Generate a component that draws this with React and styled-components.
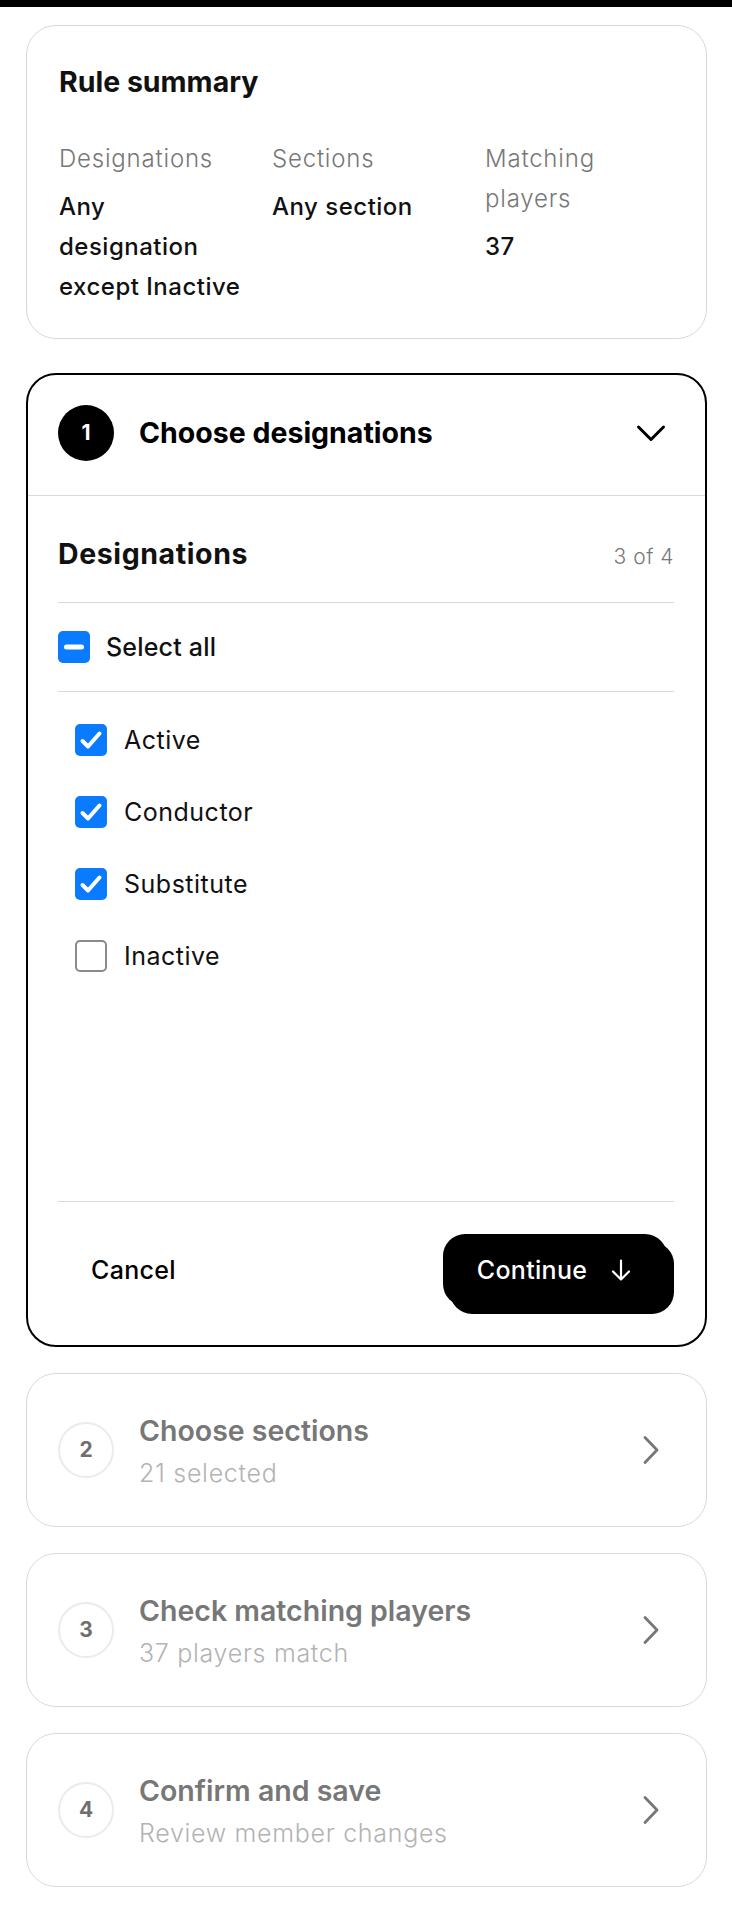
import React from 'react'
import styled, { createGlobalStyle, css } from 'styled-components'

const GlobalStyle = createGlobalStyle`
  * {
    box-sizing: border-box;
  }
  body {
    margin: 0;
    background: #ffffff;
    color: #111111;
    font-family: 'Inter', 'Liberation Sans', sans-serif;
  }
`

const designations = [
  { label: 'Active', checked: true },
  { label: 'Conductor', checked: true },
  { label: 'Substitute', checked: true },
  { label: 'Inactive', checked: false },
]

const steps = [
  { n: 2, title: 'Choose sections', sub: '21 selected' },
  { n: 3, title: 'Check matching players', sub: '37 players match' },
  { n: 4, title: 'Confirm and save', sub: 'Review member changes' },
]

const Check = () => (
  <svg width='32' height='32' viewBox='0 0 32 32' fill='none'>
    <polyline
      points='7.5,17 13,22.5 24.5,9.5'
      stroke='#fff'
      strokeWidth='4'
      strokeLinecap='round'
      strokeLinejoin='round'
    />
  </svg>
)

const Minus = () => (
  <svg width='32' height='32' viewBox='0 0 32 32' fill='none'>
    <line x1='8.5' y1='16' x2='23.5' y2='16' stroke='#fff' strokeWidth='5' strokeLinecap='round' />
  </svg>
)

const ChevronDown = () => (
  <svg width='32' height='32' viewBox='0 0 32 32' fill='none'>
    <polyline
      points='3.5,10 16,22.5 28.5,10'
      stroke='#000'
      strokeWidth='3'
      strokeLinecap='round'
      strokeLinejoin='round'
    />
  </svg>
)

const ChevronRight = () => (
  <svg width='32' height='32' viewBox='0 0 32 32' fill='none'>
    <polyline
      points='10,3.5 22,16 10,28.5'
      stroke='#777'
      strokeWidth='2.8'
      strokeLinecap='round'
      strokeLinejoin='round'
    />
  </svg>
)

const ArrowDown = () => (
  <svg width='24' height='24' viewBox='0 0 24 24' fill='none'>
    <path
      d='M12 2.5v19M4 13.5l8 8 8-8'
      stroke='#fff'
      strokeWidth='2.2'
      strokeLinecap='round'
      strokeLinejoin='round'
    />
  </svg>
)

const App = () => {
  return (
    <>
      <GlobalStyle />
      <TopBar />
      <Page>
        <SummaryCard>
          <SummaryTitle>Rule summary</SummaryTitle>
          <SummaryGrid>
            <div>
              <SummaryLabel>Designations</SummaryLabel>
              <SummaryValue>Any designation except Inactive</SummaryValue>
            </div>
            <div>
              <SummaryLabel>Sections</SummaryLabel>
              <SummaryValue>Any section</SummaryValue>
            </div>
            <div>
              <SummaryLabel>Matching players</SummaryLabel>
              <SummaryValue>37</SummaryValue>
            </div>
          </SummaryGrid>
        </SummaryCard>

        <StepCard $active>
          <StepHeader $active>
            <StepNumber $active>1</StepNumber>
            <StepText $active>
              <StepTitle $active>Choose designations</StepTitle>
            </StepText>
            <ChevronDown />
          </StepHeader>

          <StepBody>
            <SectionHead>
              <SectionTitle>Designations</SectionTitle>
              <Count>3 of 4</Count>
            </SectionHead>

            <SelectAllRow>
              <Box $checked>
                <Minus />
              </Box>
              <SelectAllLabel>Select all</SelectAllLabel>
            </SelectAllRow>

            <OptionList>
              {designations.map((d) => (
                <OptionRow key={d.label}>
                  <Box $checked={d.checked}>{d.checked && <Check />}</Box>
                  <OptionLabel>{d.label}</OptionLabel>
                </OptionRow>
              ))}
            </OptionList>

            <Footer>
              <CancelButton type='button'>Cancel</CancelButton>
              <ContinueButton type='button'>
                Continue
                <ArrowDown />
              </ContinueButton>
            </Footer>
          </StepBody>
        </StepCard>

        {steps.map((s) => (
          <StepCard key={s.n}>
            <StepHeader>
              <StepNumber>{s.n}</StepNumber>
              <StepText>
                <StepTitle>{s.title}</StepTitle>
                <StepSub>{s.sub}</StepSub>
              </StepText>
              <ChevronRight />
            </StepHeader>
          </StepCard>
        ))}
      </Page>
    </>
  )
}

const TopBar = styled.div`
  height: 7px;
  background: #000;
`

const Page = styled.main`
  padding: 18px 25px 25px 26px;
  display: flex;
  flex-direction: column;
`

const SummaryCard = styled.section`
  border: 1.5px solid #d8d8d8;
  border-radius: 30px;
  padding: 35px 32px 31px;
  margin-bottom: 34px;
`

const SummaryTitle = styled.h2`
  margin: 0 0 35px;
  font-size: 28.5px;
  font-weight: 700;
  line-height: 1.5;
`

const SummaryGrid = styled.div`
  display: grid;
  grid-template-columns: repeat(3, 1fr);
  column-gap: 24px;
`

const SummaryLabel = styled.div`
  font-size: 24px;
  font-weight: 300;
  line-height: 40px;
  letter-spacing: 0.8px;
  color: #777;
  margin-bottom: 8px;
`

const SummaryValue = styled.div`
  font-size: 24px;
  font-weight: 500;
  line-height: 40px;
  letter-spacing: 0.5px;
  color: #111;
`

const StepCard = styled.section`
  border-radius: 30px;
  ${({ $active }) =>
    $active
      ? css`
          border: 2px solid #000;
        `
      : css`
          border: 1.5px solid #d9d9d9;
          min-height: 154px;
          display: flex;
          align-items: center;
        `}
  & + & {
    margin-top: 26px;
  }
`

const StepHeader = styled.div`
  flex: 1;
  display: flex;
  align-items: center;
  gap: 25px;
  padding: ${({ $active }) => ($active ? '30px 38px 34px 30px' : '0 39px 0 31px')};
  border-bottom: ${({ $active }) => ($active ? '1.5px solid #d9d9d9' : 'none')};
`

const StepNumber = styled.div`
  flex: none;
  width: 56px;
  height: 56px;
  border-radius: 50%;
  display: grid;
  place-items: center;
  font-size: 21px;
  font-weight: 700;
  ${({ $active }) =>
    $active
      ? css`
          background: #000;
          color: #fff;
        `
      : css`
          border: 2px solid #ebebeb;
          color: #6f6f6f;
        `}
`

const StepText = styled.div`
  flex: 1;
  display: flex;
  flex-direction: column;
  gap: 5px;
  padding-top: ${({ $active }) => ($active ? '0' : '6px')};
`

const StepTitle = styled.h3`
  margin: 0;
  font-size: 28.5px;
  font-weight: ${({ $active }) => ($active ? 700 : 600)};
  line-height: 36px;
  color: ${({ $active }) => ($active ? '#000' : '#777')};
`

const StepSub = styled.div`
  font-size: 25px;
  font-weight: 300;
  line-height: 38px;
  letter-spacing: 0.7px;
  color: #b3b3b3;
`

const StepBody = styled.div`
  padding: 0 31px 0 30px;
`

const SectionHead = styled.div`
  display: flex;
  justify-content: space-between;
  align-items: baseline;
  padding: 39px 0 30px;
  border-bottom: 1.5px solid #d9d9d9;
`

const SectionTitle = styled.h4`
  margin: 0;
  font-size: 28.5px;
  font-weight: 700;
  line-height: 37px;
  letter-spacing: 0.6px;
`

const Count = styled.span`
  font-size: 21px;
  font-weight: 300;
  letter-spacing: 0.5px;
  color: #777;
`

const SelectAllRow = styled.label`
  display: flex;
  align-items: center;
  gap: 16px;
  padding: 28px 0;
  border-bottom: 1.5px solid #d9d9d9;
`

const Box = styled.span`
  flex: none;
  width: 32px;
  height: 32px;
  border-radius: 5px;
  display: grid;
  place-items: center;
  ${({ $checked }) =>
    $checked
      ? css`
          background: #0a7aff;
        `
      : css`
          background: #fff;
          border: 2px solid #8a8a8a;
        `}
`

const SelectAllLabel = styled.span`
  font-size: 25px;
  font-weight: 500;
  letter-spacing: 0.2px;
`

const OptionList = styled.div`
  min-height: 509px;
  padding: 12px 0 0 17px;
`

const OptionRow = styled.label`
  display: flex;
  align-items: center;
  gap: 17px;
  padding: 20px 0;
`

const OptionLabel = styled.span`
  font-size: 25px;
  font-weight: 400;
  letter-spacing: 0.5px;
`

const Footer = styled.div`
  display: flex;
  justify-content: space-between;
  align-items: center;
  border-top: 1.5px solid #d9d9d9;
  padding: 32px 7px 39px 0;
`

const CancelButton = styled.button`
  height: 72px;
  padding: 0 33px;
  border: none;
  background: transparent;
  font-family: inherit;
  font-size: 25px;
  font-weight: 500;
  letter-spacing: 0.3px;
  color: #000;
`

const ContinueButton = styled.button`
  width: 224px;
  height: 72px;
  display: flex;
  align-items: center;
  justify-content: center;
  gap: 22px;
  border: none;
  border-radius: 22px;
  background: #000;
  box-shadow: 7px 8px 0 0 #000;
  color: #fff;
  font-family: inherit;
  font-size: 25px;
  font-weight: 500;
  letter-spacing: 0.3px;
`

export default App
